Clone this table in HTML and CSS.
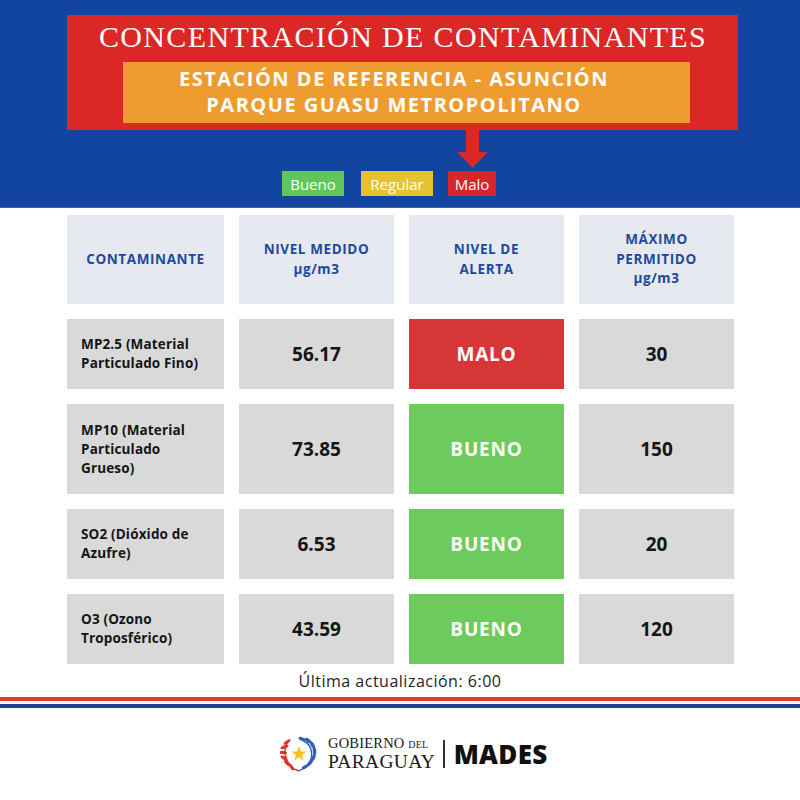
FILE: index.html
```html
<!DOCTYPE html>
<html lang="es">
<head>
<meta charset="utf-8">
<title>Concentración de contaminantes</title>
<link rel="stylesheet" href="styles.css">
</head>
<body>
<div class="page">
  <header class="top">
    <div class="title-box">
      <h1 class="title">CONCENTRACIÓN DE CONTAMINANTES</h1>
      <div class="station">ESTACIÓN DE REFERENCIA - ASUNCIÓN<br>PARQUE GUASU METROPOLITANO</div>
    </div>
    <svg class="arrow" width="32" height="38" viewBox="0 0 32 38" aria-hidden="true">
      <rect x="9" y="0" width="13" height="23" fill="#dc2727"/>
      <polygon points="0,22 31,22 15.5,38" fill="#dc2727"/>
    </svg>
    <div class="legend">
      <span class="tag tag-good">Bueno</span>
      <span class="tag tag-regular">Regular</span>
      <span class="tag tag-bad">Malo</span>
    </div>
  </header>

  <section class="grid">
    <div class="cell head">CONTAMINANTE</div>
    <div class="cell head">NIVEL MEDIDO<br>µg/m3</div>
    <div class="cell head">NIVEL DE<br>ALERTA</div>
    <div class="cell head">MÁXIMO<br>PERMITIDO<br>µg/m3</div>

    <div class="cell name">MP2.5 (Material<br>Particulado Fino)</div>
    <div class="cell value">56.17</div>
    <div class="cell alert bad">MALO</div>
    <div class="cell value">30</div>

    <div class="cell name">MP10 (Material<br>Particulado<br>Grueso)</div>
    <div class="cell value">73.85</div>
    <div class="cell alert good">BUENO</div>
    <div class="cell value">150</div>

    <div class="cell name">SO2 (Dióxido de<br>Azufre)</div>
    <div class="cell value">6.53</div>
    <div class="cell alert good">BUENO</div>
    <div class="cell value">20</div>

    <div class="cell name">O3 (Ozono<br>Troposférico)</div>
    <div class="cell value">43.59</div>
    <div class="cell alert good">BUENO</div>
    <div class="cell value">120</div>
  </section>

  <p class="updated">Última actualización: 6:00</p>

  <div class="stripes">
    <div class="stripe stripe-red"></div>
    <div class="stripe stripe-white"></div>
    <div class="stripe stripe-blue"></div>
  </div>

  <footer class="brand">
    <svg class="emblem" width="38" height="36" viewBox="0 0 38 36" aria-hidden="true">
      <g fill="#e0312f">
        <ellipse cx="7" cy="6" rx="4.2" ry="1.6" transform="rotate(-35 7 6)"/>
        <ellipse cx="4.5" cy="11" rx="4.2" ry="1.6" transform="rotate(-20 4.5 11)"/>
        <ellipse cx="3.2" cy="16.5" rx="4" ry="1.6" transform="rotate(5 3.2 16.5)"/>
        <ellipse cx="4" cy="22" rx="4" ry="1.6" transform="rotate(30 4 22)"/>
        <ellipse cx="7" cy="27" rx="4" ry="1.6" transform="rotate(45 7 27)"/>
        <ellipse cx="11.5" cy="31" rx="4" ry="1.5" transform="rotate(60 11.5 31)"/>
        <path d="M9 4 C3 12 3 24 14 33 L19 35" fill="none" stroke="#e0312f" stroke-width="1.4"/>
      </g>
      <g fill="#2f5fb6">
        <ellipse cx="22" cy="3" rx="3.6" ry="1.7" transform="rotate(20 22 3)"/>
        <ellipse cx="28" cy="4.5" rx="3.8" ry="1.8" transform="rotate(35 28 4.5)"/>
        <ellipse cx="32.5" cy="9" rx="4" ry="1.8" transform="rotate(60 32.5 9)"/>
        <ellipse cx="34.5" cy="15" rx="4" ry="1.8" transform="rotate(85 34.5 15)"/>
        <ellipse cx="33.5" cy="21.5" rx="4" ry="1.8" transform="rotate(110 33.5 21.5)"/>
        <ellipse cx="30" cy="27" rx="4" ry="1.7" transform="rotate(130 30 27)"/>
        <ellipse cx="25" cy="31" rx="3.6" ry="1.6" transform="rotate(150 25 31)"/>
        <path d="M22 4 C34 9 35 24 24 32 L19 35" fill="none" stroke="#2f5fb6" stroke-width="1.4"/>
      </g>
      <polygon fill="#f4c21b" points="19,10 20.9,15.4 26.6,15.5 22.1,19 23.7,24.5 19,21.3 14.3,24.5 15.9,19 11.4,15.5 17.1,15.4"/>
    </svg>
    <div class="gov">
      <span class="gov-top">GOBIERNO <span class="gov-del">DEL</span></span>
      <span class="gov-bottom">PARAGUAY</span>
    </div>
    <span class="divider"></span>
    <span class="mades">MADES</span>
  </footer>
</div>
</body>
</html>
```

FILE: styles.css
```css
html, body {
  margin: 0;
  padding: 0;
  background: #ffffff;
}

.page {
  width: 800px;
  height: 800px;
  overflow: hidden;
  font-family: "Open Sans", "Liberation Sans", sans-serif;
}

.top {
  position: relative;
  background: #1245a0;
  height: 208px;
  padding-top: 15px;
  box-sizing: border-box;
  border-bottom: 1px solid #3d66b0;
}

.title-box {
  margin-left: 67px;
  width: 671px;
  background: #dc2727;
  padding: 5px 0 7px 0;
  box-sizing: border-box;
}

.title {
  margin: 0;
  padding-left: 1px;
  font-family: "Liberation Serif", "Times New Roman", serif;
  font-weight: 400;
  font-size: 30px;
  line-height: 34px;
  letter-spacing: 1.35px;
  color: #ffffff;
  text-align: center;
}

.station {
  margin: 8px 0 0 56px;
  width: 567px;
  height: 61px;
  box-sizing: border-box;
  padding: 4px 25px 0 0;
  background: #ee9b30;
  color: #ffffff;
  font-weight: 700;
  font-size: 20px;
  line-height: 26px;
  letter-spacing: 1.5px;
  text-align: center;
}

.arrow {
  position: absolute;
  left: 457px;
  top: 130px;
  display: block;
}

.legend {
  display: flex;
  margin: 41px 0 0 282px;
}

.tag {
  display: flex;
  align-items: center;
  justify-content: center;
  height: 25px;
  color: #ffffff;
  font-size: 15px;
  font-weight: 400;
  box-sizing: border-box;
}

.tag-good {
  width: 62px;
  background: #5fc75a;
}

.tag-regular {
  width: 72px;
  margin-left: 17px;
  background: #e6c22f;
}

.tag-bad {
  width: 48px;
  margin-left: 15px;
  background: #d8242b;
}

.grid {
  display: grid;
  grid-template-columns: 157px 155px 155px 155px;
  grid-template-rows: 89px 70px 90px 70px 70px;
  column-gap: 15px;
  row-gap: 15px;
  margin: 7px 0 0 67px;
}

.cell {
  display: flex;
  align-items: center;
  justify-content: center;
  text-align: center;
  background: #d9d9d9;
  color: #151515;
}

.head {
  background: #e6e9ef;
  color: #1c4a9e;
  font-weight: 700;
  font-size: 13.5px;
  line-height: 19.5px;
  letter-spacing: 0.6px;
}

.name {
  justify-content: flex-start;
  text-align: left;
  padding-left: 14px;
  font-weight: 700;
  font-size: 13.5px;
  line-height: 19px;
  letter-spacing: 0.15px;
}

.value {
  font-weight: 700;
  font-size: 19px;
}

.alert {
  color: #ffffff;
  font-weight: 700;
  font-size: 19px;
  letter-spacing: 0.8px;
}

.alert.bad {
  background: #d63636;
}

.alert.good {
  background: #6ccb5c;
}

.updated {
  margin: 6px 0 0 0;
  text-align: center;
  font-size: 16px;
  line-height: 22px;
  letter-spacing: 0.5px;
  color: #1e1e1e;
}

.stripes {
  margin-top: 5px;
}

.stripe {
  height: 3.5px;
}

.stripe-red {
  background: #e23b2e;
}

.stripe-white {
  background: #ffffff;
}

.stripe-blue {
  background: #1d418c;
}

.brand {
  display: flex;
  align-items: center;
  margin: 28px 0 0 280px;
}

.emblem {
  display: block;
}

.gov {
  display: flex;
  flex-direction: column;
  margin-left: 10px;
  font-family: "Liberation Serif", "Times New Roman", serif;
  color: #1a1a1a;
}

.gov-top {
  font-size: 14.5px;
  line-height: 15px;
  letter-spacing: 0.2px;
}

.gov-del {
  font-size: 10px;
}

.gov-bottom {
  font-size: 19.5px;
  line-height: 20px;
  letter-spacing: 0.3px;
}

.divider {
  width: 1.5px;
  height: 28px;
  background: #333333;
  margin-left: 8px;
}

.mades {
  margin-left: 9px;
  font-weight: 800;
  font-size: 26px;
  color: #111111;
  letter-spacing: 0.3px;
}
```
